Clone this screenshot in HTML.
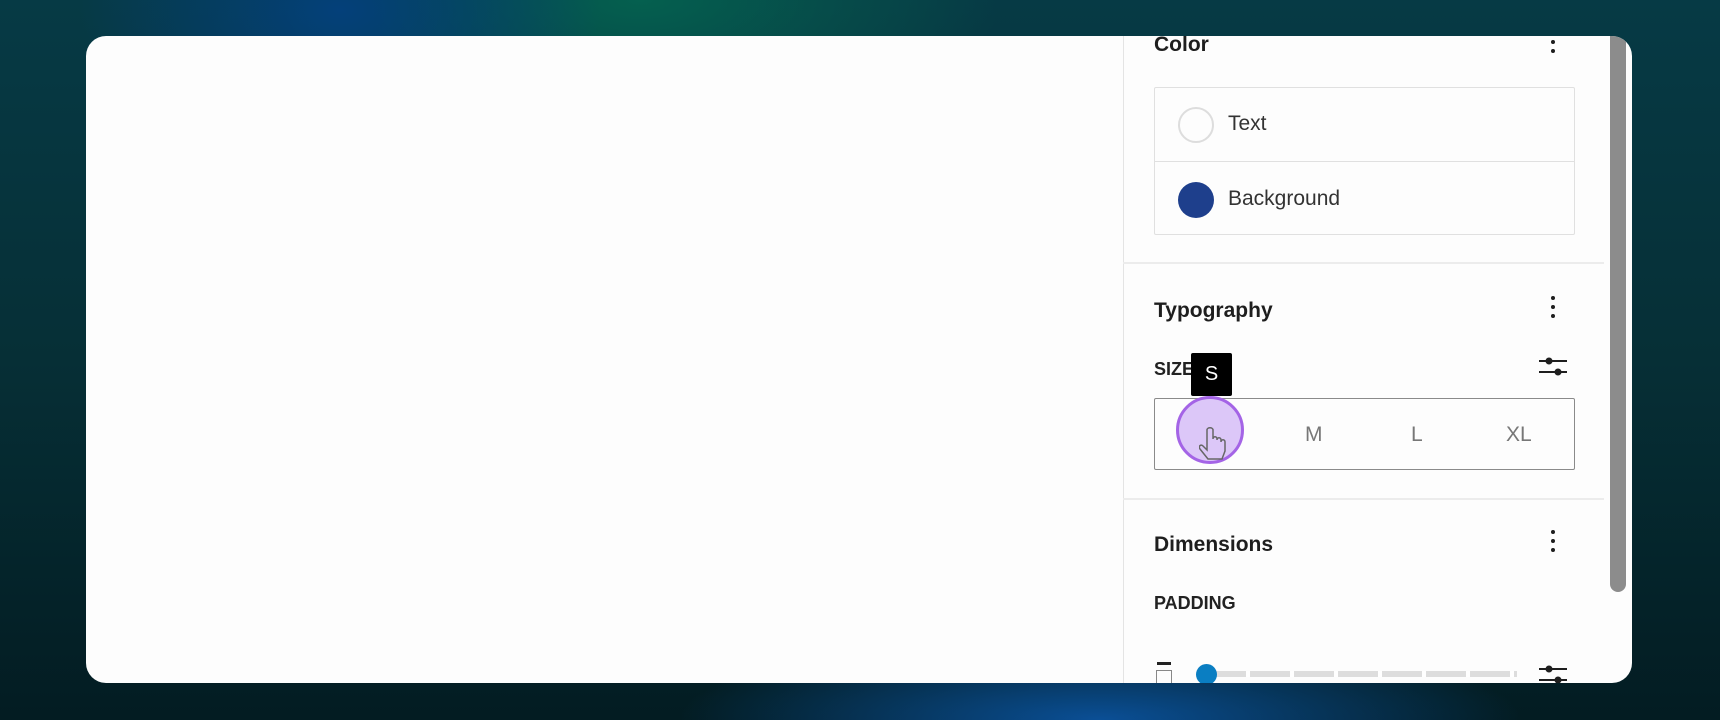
<!DOCTYPE html>
<html><head><meta charset="utf-8"><style>
*{margin:0;padding:0;box-sizing:border-box}
body{width:1720px;height:720px;overflow:hidden;position:relative;font-family:"Liberation Sans",sans-serif;
background:
radial-gradient(ellipse 260px 160px at 340px 10px,#04407a 0%,rgba(4,64,122,0) 100%),
radial-gradient(ellipse 360px 140px at 640px 0px,#05604f 0%,rgba(5,96,79,0) 100%),
radial-gradient(ellipse 420px 90px at 1100px 720px,#0a4f96 0%,rgba(10,79,150,0) 100%),
linear-gradient(180deg,#063a45 0%,#062f36 50%,#031c22 100%);}
.card{position:absolute;left:86px;top:36px;width:1546px;height:647px;background:#fdfdfd;border-radius:20px;overflow:hidden}
.side{position:absolute;left:1037px;top:0;width:1px;height:100%;background:#e4e4e4}
.t{position:absolute;color:#1e1e1e;white-space:nowrap}
.h{font-weight:bold;font-size:21px}
.kb{position:absolute;width:4px}
.kb i{display:block;width:4px;height:4px;border-radius:2px;background:#1e1e1e;margin-bottom:5px}
.hr{position:absolute;left:1037px;width:481px;height:2px;background:#ececec}
.scroll{position:absolute;left:1524px;top:0;width:16px;height:556px;background:#8c8c8c;border-radius:0 0 8px 8px}
</style></head><body>
<div class="card">
<div class="side"></div>
<div class="scroll"></div>
<div class="t h" style="left:1068px;top:-3px">Color</div>
<div class="kb" style="left:1465px;top:4px"><i></i><i></i></div>
<div style="position:absolute;left:1068px;top:51px;width:421px;height:148px;border:1px solid #e0e0e0;border-radius:2px">
 <div style="position:absolute;left:0;top:73px;width:100%;height:1px;background:#e0e0e0"></div>
 <div style="position:absolute;left:23px;top:19px;width:36px;height:36px;border-radius:50%;border:2px solid #ddd"></div>
 <div class="t" style="left:73px;top:24px;font-size:21px;color:#333">Text</div>
 <div style="position:absolute;left:23px;top:94px;width:36px;height:36px;border-radius:50%;background:#1e3f8c"></div>
 <div class="t" style="left:73px;top:99px;font-size:21px;color:#333">Background</div>
</div>
<div class="hr" style="top:226px"></div>
<div class="t h" style="left:1068px;top:263px">Typography</div>
<div class="kb" style="left:1465px;top:260px"><i></i><i></i><i></i></div>
<div class="t" style="left:1068px;top:323px;font-size:18px;font-weight:bold;color:#222">SIZE</div>
<svg style="position:absolute;left:1453px;top:318px" width="28" height="26"><line x1="0" y1="7" x2="28" y2="7" stroke="#1e1e1e" stroke-width="2"/><circle cx="10" cy="7" r="3.5" fill="#1e1e1e"/><line x1="0" y1="18" x2="28" y2="18" stroke="#1e1e1e" stroke-width="2"/><circle cx="19" cy="18" r="3.5" fill="#1e1e1e"/></svg>
<div style="position:absolute;left:1068px;top:362px;width:421px;height:72px;border:1.5px solid #8a8a8a;border-radius:2px">
 <div class="t" style="left:150px;top:24px;font-size:21px;color:#777">M</div>
 <div class="t" style="left:256px;top:24px;font-size:21px;color:#777">L</div>
 <div class="t" style="left:351px;top:24px;font-size:21px;color:#777">XL</div>
</div>
<div style="position:absolute;left:1105px;top:317px;width:41px;height:43px;background:#000;border-radius:2px;color:#fff;font-size:20px;text-align:center;line-height:43px">S</div>
<div style="position:absolute;left:1090px;top:360px;width:68px;height:68px;border-radius:50%;background:rgba(205,175,245,.7);border:3px solid #a464e6"></div>
<svg style="position:absolute;left:1113px;top:388px" width="36" height="44"><path d="M8 6 v20 l-4-4 c-2-2-5 0-3 3 l8 10 h14 l3-8 v-9 c0-3-4-3-4 0 v-2 c0-3-4-3-4 0 v-1 c0-3-4-3-4 0 V6 c0-3-6-3-6 0z" fill="none" stroke="#666" stroke-width="1.5"/></svg>
<div class="hr" style="top:462px"></div>
<div class="t h" style="left:1068px;top:497px">Dimensions</div>
<div class="kb" style="left:1465px;top:494px"><i></i><i></i><i></i></div>
<div class="t" style="left:1068px;top:557px;font-size:18px;font-weight:bold;color:#222">PADDING</div>
<div style="position:absolute;left:1071px;top:626px;width:14px;height:3px;background:#222"></div>
<div style="position:absolute;left:1070px;top:634px;width:16px;height:20px;border:1.5px solid #888;border-bottom:none"></div>
<div style="position:absolute;left:1120px;top:635px;width:311px;height:6px;background:repeating-linear-gradient(90deg,#ddd 0 40px,#fff 40px 44px)"></div>
<div style="position:absolute;left:1110px;top:628px;width:21px;height:21px;border-radius:50%;background:#0a7ec2"></div>
<svg style="position:absolute;left:1453px;top:626px" width="28" height="26"><line x1="0" y1="7" x2="28" y2="7" stroke="#1e1e1e" stroke-width="2"/><circle cx="10" cy="7" r="3.5" fill="#1e1e1e"/><line x1="0" y1="18" x2="28" y2="18" stroke="#1e1e1e" stroke-width="2"/><circle cx="19" cy="18" r="3.5" fill="#1e1e1e"/></svg>
</div>
</body></html>
